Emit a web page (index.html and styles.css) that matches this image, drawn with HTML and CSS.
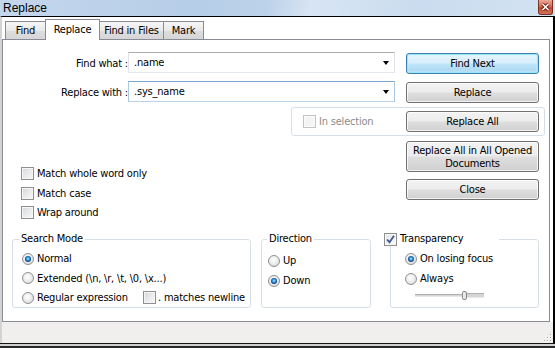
FILE: index.html
```html
<!DOCTYPE html>
<html>
<head>
<meta charset="utf-8">
<title>Replace</title>
<link rel="stylesheet" href="styles.css">
</head>
<body>
<div class="window">
  <div class="titlebar">
    <span class="title">Replace</span>
    <span class="close-btn"><svg width="9" height="8" viewBox="0 0 9 8"><path d="M1.5 1 L7.5 7 M7.5 1 L1.5 7" stroke="#5a1a10" stroke-width="3.2"/><path d="M1.5 1 L7.5 7 M7.5 1 L1.5 7" stroke="#fff" stroke-width="1.6"/></svg></span>
  </div>
  <div class="client">
    <div class="tabs">
      <div class="tab tab-find">Find</div>
      <div class="tab tab-active">Replace</div>
      <div class="tab tab-files">Find in Files</div>
      <div class="tab tab-mark">Mark</div>
    </div>
    <div class="panel">
      <div class="form-grid">
        <div class="field-label lbl-find">Find what :</div>
        <div class="combo combo-find"><span class="combo-text">.name</span><span class="arrow"></span></div>
        <button class="btn btn-default btn-find">Find Next</button>

        <div class="field-label lbl-repl">Replace with :</div>
        <div class="combo combo-focus combo-repl"><span class="combo-text">.sys_name</span><span class="arrow"></span></div>
        <button class="btn btn-repl">Replace</button>

        <div class="sel-group">
          <label class="check check-disabled"><span class="cb"></span>In selection</label>
          <button class="btn btn-inner">Replace All</button>
        </div>

        <button class="btn btn-docs">Replace All in All Opened<br>Documents</button>
        <button class="btn btn-close">Close</button>

        <div class="options">
          <label class="check"><span class="cb"></span>Match whole word only</label>
          <label class="check"><span class="cb"></span>Match case</label>
          <label class="check"><span class="cb"></span>Wrap around</label>
        </div>
      </div>

      <div class="groups">
        <fieldset class="group group-search">
          <legend class="legend legend-search">Search Mode</legend>
          <div class="group-body body-search">
            <label class="radio"><span class="rb rb-on"></span>Normal</label>
            <label class="radio"><span class="rb"></span>Extended (\n, \r, \t, \0, \x...)</label>
            <div class="radio-row">
              <label class="radio radio-fixed"><span class="rb"></span>Regular expression</label>
              <label class="check check-tight"><span class="cb"></span>. matches newline</label>
            </div>
          </div>
        </fieldset>
        <fieldset class="group group-dir">
          <legend class="legend legend-dir">Direction</legend>
          <div class="group-body body-dir">
            <label class="radio"><span class="rb"></span>Up</label>
            <label class="radio"><span class="rb rb-on"></span>Down</label>
          </div>
        </fieldset>
        <fieldset class="group group-trans">
          <legend class="legend legend-trans"><span class="legend-check"><span class="cb cb-on"><svg width="11" height="11" viewBox="0 0 11 11"><path d="M2 5.5 L4.5 8.2 L9 1.8" fill="none" stroke="#3d5a96" stroke-width="1.8"/></svg></span>Transparency</span></legend>
          <div class="group-body body-trans">
            <label class="radio"><span class="rb rb-on"></span>On losing focus</label>
            <label class="radio"><span class="rb"></span>Always</label>
            <div class="slider"><span class="slider-track"></span><span class="slider-thumb"></span></div>
          </div>
        </fieldset>
      </div>
    </div>
    <div class="statusbar">
      <svg class="grip" width="10" height="10" viewBox="0 0 10 10">
        <rect x="8" y="2" width="1" height="1" fill="#a9a9a9"/><rect x="9" y="3" width="1" height="1" fill="#fff"/>
        <rect x="5" y="5" width="1" height="1" fill="#a9a9a9"/><rect x="6" y="6" width="1" height="1" fill="#fff"/>
        <rect x="8" y="5" width="1" height="1" fill="#a9a9a9"/><rect x="9" y="6" width="1" height="1" fill="#fff"/>
        <rect x="2" y="8" width="1" height="1" fill="#a9a9a9"/><rect x="3" y="9" width="1" height="1" fill="#fff"/>
        <rect x="5" y="8" width="1" height="1" fill="#a9a9a9"/><rect x="6" y="9" width="1" height="1" fill="#fff"/>
        <rect x="8" y="8" width="1" height="1" fill="#a9a9a9"/><rect x="9" y="9" width="1" height="1" fill="#fff"/>
      </svg>
    </div>
  </div>
  <div class="frame-bottom"></div>
</div>
</body>
</html>
```

FILE: styles.css
```css
* { box-sizing: border-box; }

html, body {
  margin: 0;
  padding: 0;
  background: #fff;
}

body {
  font-family: "DejaVu Sans Condensed", "Liberation Sans", Arial, sans-serif;
  font-stretch: condensed;
  font-size: 11px;
  line-height: 13px;
  letter-spacing: -0.2px;
  color: #000;
}

.window {
  width: 555px;
  height: 348px;
  display: flex;
  flex-direction: column;
  overflow: hidden;
  background: #fff;
}

/* ---------- title bar ---------- */
.titlebar {
  height: 16px;
  flex: none;
  display: flex;
  justify-content: space-between;
  align-items: flex-start;
  padding: 0 2px 0 3px;
  background: linear-gradient(100deg, #c3d6ec 0%, #b7cee8 35%, #bcd2ea 48%, #d8e5f3 56%, #cadcef 75%, #d3e2f2 100%);
}

.title {
  font-family: "Liberation Sans", Arial, sans-serif;
  font-stretch: normal;
  font-size: 12px;
  line-height: 16px;
  letter-spacing: 0;
  color: #000;
}

.close-btn {
  width: 15px;
  height: 15px;
  display: flex;
  align-items: center;
  justify-content: center;
  border: 1px solid #7a3224;
  border-top: none;
  border-radius: 0 0 3px 3px;
  background: linear-gradient(#e9a897, #d66d56 45%, #c4452c 55%, #d2735a);
}

/* ---------- client ---------- */
.client {
  flex: 1;
  display: flex;
  flex-direction: column;
  border-top: 1px solid #000;
  border-left: 2px solid #d3d3d3;
  border-right: 2px solid #000;
  background: #fff;
}

.tabs {
  display: flex;
  align-items: flex-end;
  height: 22px;
  padding: 2px 0 0 3px;
  flex: none;
}

.tab {
  height: 18px;
  display: flex;
  align-items: center;
  justify-content: center;
  border: 1px solid #898c95;
  border-bottom: none;
  margin-left: -1px;
  background: linear-gradient(#f6f6f6, #e9e9e9 50%, #dedede 50%, #d6d6d6);
  white-space: nowrap;
}

.tab-find { width: 41px; margin-left: 0; }
.tab-active {
  width: 55px;
  height: 21px;
  margin-bottom: -1px;
  padding-bottom: 2px;
  background: #fff;
  position: relative;
  z-index: 1;
}
.tab-files { width: 65px; }
.tab-mark { width: 41px; }

.panel {
  height: 283px;
  flex: none;
  margin-right: 3px;
  border: 1px solid #898c95;
  background: #fff;
  padding-top: 12px;
}

/* ---------- top form grid ---------- */
.form-grid {
  display: grid;
  grid-template-columns: 18px 103px 4px 163px 104px 11px 133px 6px 1fr;
  grid-template-rows: 22px 7px 22px 4px 29px 5px 31px 7px 21px 19px;
}

.field-label {
  grid-column: 1 / 4;
  justify-self: end;
  align-self: center;
  white-space: nowrap;
}
.lbl-find { grid-row: 1; }
.lbl-repl { grid-row: 3; }

.combo {
  grid-column: 4 / 6;
  align-self: start;
  height: 21px;
  display: flex;
  align-items: center;
  justify-content: space-between;
  padding: 0 5px 0 5px;
  border: 1px solid;
  border-color: #abadb3 #e2e3ea #e3e9ef #e2e3ea;
  background: #fff;
}
.combo-find { grid-row: 1; }
.combo-repl { grid-row: 3; }
.combo-focus { border-color: #7da6cf #a9c8e4 #b7d4ec #a9c8e4; }

.arrow {
  width: 0;
  height: 0;
  border-left: 3.5px solid transparent;
  border-right: 3.5px solid transparent;
  border-top: 4px solid #000;
  margin-top: 1px;
}

.btn {
  font: inherit;
  letter-spacing: inherit;
  color: #000;
  height: 21px;
  width: 133px;
  padding: 0;
  border: 1px solid #707070;
  border-radius: 3px;
  background: linear-gradient(#f3f3f3, #ececec 48%, #dedede 52%, #d0d0d0);
  box-shadow: inset 0 0 0 1px rgba(255, 255, 255, 0.75);
  line-height: 13px;
  text-align: center;
}

.btn-default {
  border-color: #3c7fb1;
  background: linear-gradient(#e6f4fc, #d6eefb 48%, #bfe4f8 52%, #a9d8f2);
  box-shadow: inset 0 0 0 1px #9be6fb, inset 0 0 2px 1px #cdf3ff;
}

.btn-find { grid-column: 7 / 8; grid-row: 1; align-self: end; }
.btn-repl { grid-column: 7 / 8; grid-row: 3; align-self: end; }
.btn-docs { grid-column: 7 / 8; grid-row: 7; height: 31px; }
.btn-close { grid-column: 7 / 8; grid-row: 9; }

.sel-group {
  grid-column: 5 / 9;
  grid-row: 5;
  display: flex;
  align-items: center;
  padding: 3px 5px 3px 11px;
  border: 1px solid #d5dfe5;
  border-radius: 3px;
}
.btn-inner { margin-left: auto; }

.options {
  grid-column: 2 / 5;
  grid-row: 7 / 11;
  align-self: end;
  display: flex;
  flex-direction: column;
  gap: 6.5px;
}

/* ---------- checkboxes & radios ---------- */
.check, .radio {
  display: flex;
  align-items: center;
  height: 13px;
  white-space: nowrap;
}

.cb {
  flex: none;
  width: 13px;
  height: 13px;
  margin-right: 3px;
  border: 1px solid #8e8f8f;
  background: linear-gradient(135deg, #d2d5d9 0%, #e9eaec 50%, #f9f9f9 100%);
  box-shadow: inset 0 0 0 1px #f6f6f6;
  display: flex;
  align-items: center;
  justify-content: center;
}

.check-disabled { color: #8d8d8d; }
.check-disabled .cb {
  border-color: #c3c3c3;
  background: #f4f4f4;
  box-shadow: inset 0 0 0 1px #fbfbfb;
}

.check-tight .cb { margin-right: 2px; }

.cb-on {
  background: linear-gradient(135deg, #e3e5e8, #fbfbfb);
}

.rb {
  flex: none;
  width: 12px;
  height: 12px;
  margin-right: 3px;
  border-radius: 50%;
  border: 1px solid #8f9091;
  background: radial-gradient(circle at 45% 40%, #ffffff 0%, #eeeeee 45%, #d2d2d2 100%);
  display: flex;
  align-items: center;
  justify-content: center;
}

.rb-on::after {
  content: "";
  width: 6px;
  height: 6px;
  border-radius: 50%;
  background: radial-gradient(circle at 50% 45%, #b8eeff 0, #46a8ea 1.2px, #1766ad 2.4px, #0b3c74 3px);
}

/* ---------- group boxes ---------- */
.groups {
  display: flex;
  margin-top: 13px;
  padding-left: 9px;
}

.group {
  margin: 0;
  padding: 0;
  min-width: 0;
  height: 76px;
  border: 1px solid #d5dfe5;
  border-radius: 3px;
}

.group-search { width: 239px; }
.group-dir { width: 110px; margin-left: 10px; }
.group-trans { width: 149px; margin-left: 19px; }

.legend {
  font: inherit;
  line-height: 14px;
  padding: 0 2px;
}
.legend-search { margin-left: 6px; }
.legend-dir { margin-left: 5px; }
.legend-trans {
  margin-left: -7px;
  padding: 0 36px 0 0;
}

.legend-check {
  display: flex;
  align-items: center;
  height: 14px;
  background: #fff;
}

.group-body {
  display: flex;
  flex-direction: column;
}

.body-search { padding: 6px 0 0 9px; gap: 6.5px; }
.body-dir { padding: 8px 0 0 6px; gap: 7px; }
.body-trans { padding: 6px 0 0 14px; gap: 7px; }

.radio-row {
  display: flex;
  align-items: center;
}
.radio-fixed { width: 121px; }

.slider {
  width: 69px;
  height: 9px;
  margin: -1px 0 0 10px;
  display: flex;
  align-items: center;
}
.slider-track {
  width: 47px;
  height: 3px;
  border-top: 1px solid #b0b0b0;
  border-bottom: 1px solid #e8e8e8;
  background: #d6d6d6;
  flex: none;
}
.slider-thumb {
  flex: none;
  width: 5px;
  height: 9px;
  border: 1px solid #8a8a8a;
  border-radius: 2px;
  background: linear-gradient(90deg, #f6f6f6, #dcdcdc);
}
.slider::after {
  content: "";
  flex: 1;
  height: 3px;
  border-top: 1px solid #b0b0b0;
  border-bottom: 1px solid #e8e8e8;
  background: #d6d6d6;
}

/* ---------- status bar & frame ---------- */
.statusbar {
  flex: 1;
  display: flex;
  justify-content: flex-end;
  align-items: flex-end;
  background: #f0efee;
  padding: 0 1px 1px 0;
}

.frame-bottom {
  flex: none;
  height: 5px;
  border-top: 1px solid #141414;
  border-bottom: 2px solid #2a2a2a;
  background: #cfcfcf;
}
```
